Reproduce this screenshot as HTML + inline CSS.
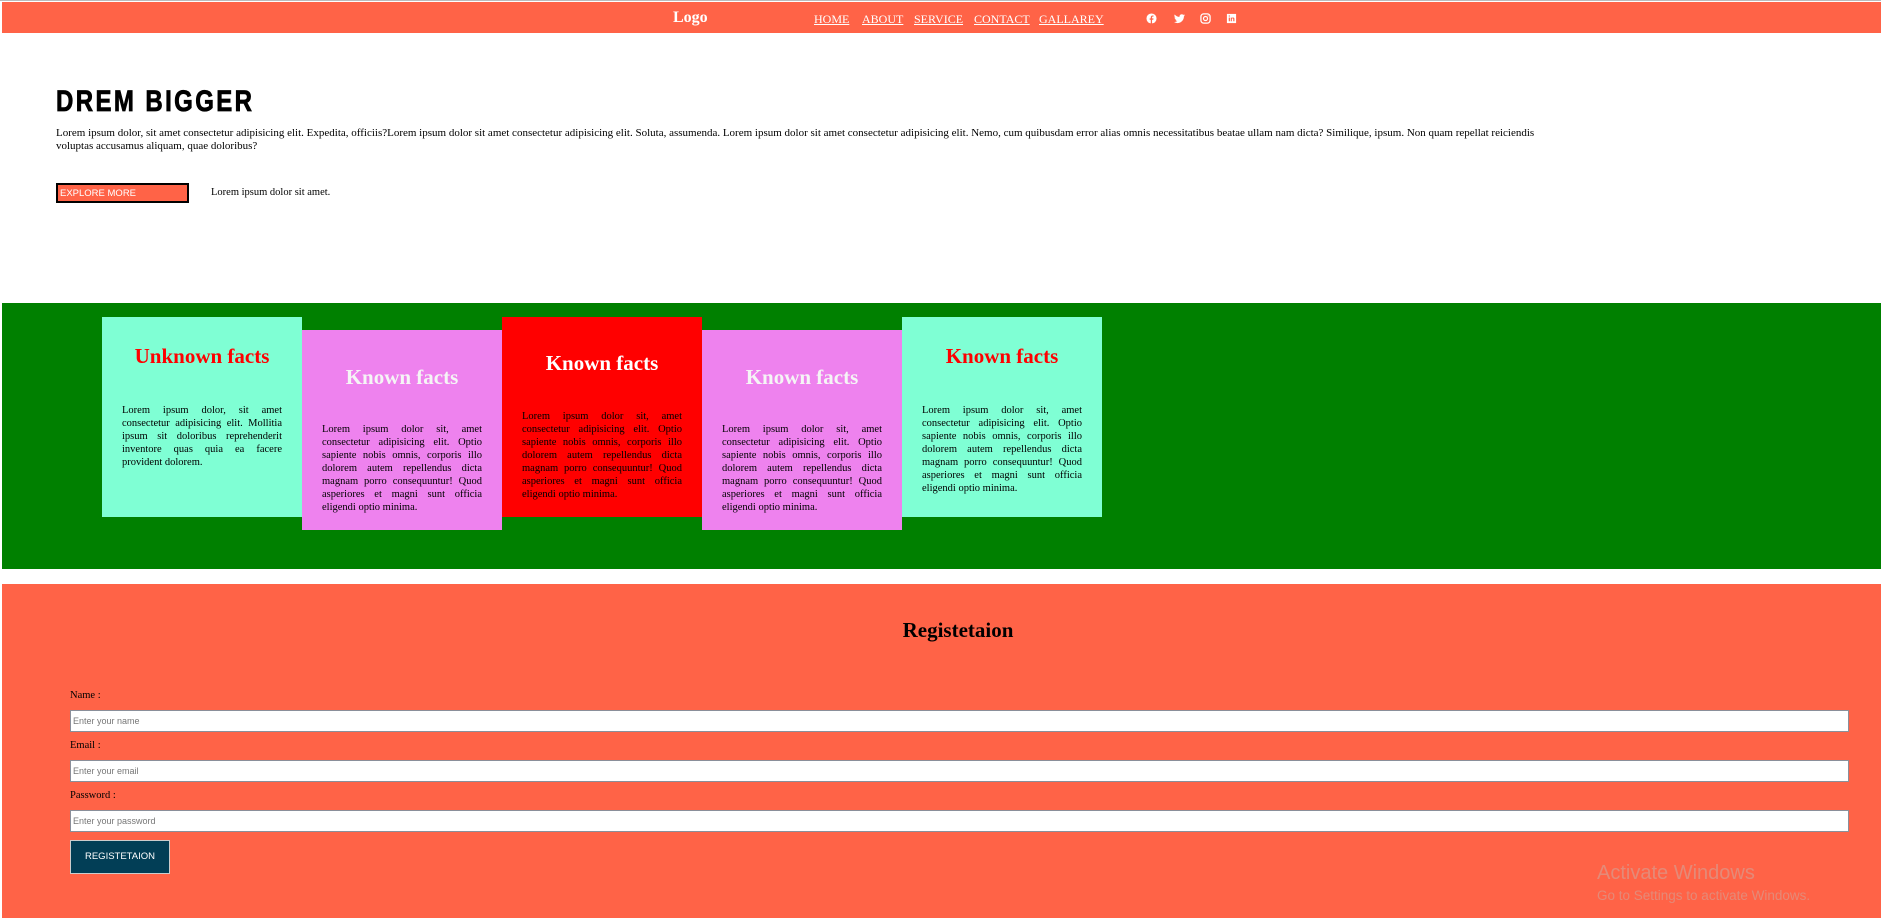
<!DOCTYPE html>
<html><head><meta charset="utf-8"><style>
*{box-sizing:border-box;margin:0;padding:0}
body{width:1881px;height:918px;overflow:hidden;background:#fff;font-family:"Liberation Serif",serif;position:relative;border-top:1px solid #bbb}
.nav{position:absolute;left:2px;top:1px;right:0;height:31px;background:#ff6347;color:#fff}
.logo{position:absolute;left:671px;top:7px;font-weight:bold;font-size:16px}
.links a{position:absolute;top:10px;color:#fff;font-size:12px;text-decoration:underline}
.ic{position:absolute;top:11px;width:11px;height:11px}
h1{position:absolute;left:56px;top:84px;font-family:"Liberation Sans",sans-serif;font-weight:900;font-size:30px;letter-spacing:3px;transform:scaleX(0.8);transform-origin:left;color:#000;-webkit-text-stroke:0.8px #000}
.intro{position:absolute;left:56px;top:126px;width:1545px;font-size:11px;line-height:13px}
.btn{position:absolute;left:56px;top:182px;width:133px;height:20px;background:#ff6347;border:2px solid #000;color:#fff;font-family:"Liberation Sans",sans-serif;font-size:9.5px;padding:3px 2px}
.side{position:absolute;left:211px;top:186px;font-size:10.5px}
.green{position:absolute;left:2px;top:302px;right:0;height:266px;background:#008000}
.card{position:absolute;width:200px;height:200px;padding:0 20px;text-align:center}
.card h2{font-size:21px;font-weight:bold;position:absolute;left:0;right:0}
.card p{position:absolute;left:20px;right:20px;text-align:justify;font-size:10.5px;line-height:13px}
.aq{background:#7fffd4;top:316px}.aq h2{color:red;top:27px}.aq p{top:87px}
.vi{background:#ee82ee;top:329px}.vi h2{color:#f5f5f5;top:35px}.vi p{top:93px}
.rd{background:red;top:316px}.rd h2{color:#fff;top:34px}.rd p{top:93px}
.reg{position:absolute;left:2px;top:583px;right:0;bottom:0;background:#ff6347}
.reg h3{position:absolute;left:0;width:1912px;text-align:center;top:34px;font-size:21px}
.lbl{position:absolute;left:68px;font-size:10.5px}
.inp{position:absolute;left:68px;width:1779px;height:22px;background:#fff;border:1px solid #8a8f9a;font-family:"Liberation Sans",sans-serif;font-size:9px;color:#777;padding:5px 2px}
.rb{position:absolute;left:68px;top:256px;width:100px;height:34px;background:#023e56;border:1px solid #ccc;color:#fff;font-family:"Liberation Sans",sans-serif;font-size:9.5px;text-align:center;line-height:32px}
.wm{position:absolute;color:#e48a78;font-family:"Liberation Sans",sans-serif}
</style></head><body>
<div class="nav">
<div class="logo">Logo</div>
<div class="links"><a style="left:812px">HOME</a><a style="left:860px">ABOUT</a><a style="left:912px">SERVICE</a><a style="left:972px">CONTACT</a><a style="left:1037px">GALLAREY</a></div>
<svg class="ic" style="left:1144px" viewBox="0 0 12 12"><circle cx="6" cy="6" r="5.5" fill="#fff"/><path d="M6.6 12V7.3h1.4l.2-1.5H6.6v-1c0-.5.2-.8.8-.8h.8V2.7H7.1c-1.2 0-1.9.7-1.9 1.9v1.2H4v1.5h1.2V12z" fill="#ff6347"/></svg>
<svg class="ic" style="left:1172px" viewBox="0 0 12 12"><path d="M12 2.3c-.4.2-.9.3-1.4.4.5-.3.9-.8 1.1-1.3-.5.3-1 .5-1.600.6A2.5 2.5 0 006 4.2 7 7 0 01.8 1.6a2.5 2.5 0 00.8 3.3c-.4 0-.8-.1-1.1-.3 0 1.2.9 2.2 2 2.4-.4.1-.8.1-1.1 0 .3 1 1.2 1.7 2.300 1.700A5 5 0 010 9.8 7 7 0 003.8 11c4.5 0 7-3.8 7-7v-.3c.5-.4.9-.8 1.2-1.4z" fill="#fff"/></svg>
<svg class="ic" style="left:1198px" viewBox="0 0 12 12"><rect x="1" y="1" width="10" height="10" rx="3" fill="none" stroke="#fff" stroke-width="1.4"/><circle cx="6" cy="6" r="2.2" fill="none" stroke="#fff" stroke-width="1.3"/><circle cx="8.8" cy="3.2" r=".6" fill="#fff"/></svg>
<svg class="ic" style="left:1224px" viewBox="0 0 12 12"><rect x="1" y="1" width="10" height="10" fill="#fff"/><path d="M3 5h1.3v4H3zM3.6 2.6a.7.7 0 110 1.4.7.7 0 010-1.4zM5.2 5h1.2v.6c.2-.4.7-.7 1.3-.7 1.3 0 1.5.8 1.5 1.9V9H7.9V7c0-.5 0-1.1-.7-1.1s-.8.5-.8 1.1v2H5.2z" fill="#ff6347"/></svg>
</div>
<h1>DREM BIGGER</h1>
<p class="intro">Lorem ipsum dolor, sit amet consectetur adipisicing elit. Expedita, officiis?Lorem ipsum dolor sit amet consectetur adipisicing elit. Soluta, assumenda. Lorem ipsum dolor sit amet consectetur adipisicing elit. Nemo, cum quibusdam error alias omnis necessitatibus beatae ullam nam dicta? Similique, ipsum. Non quam repellat reiciendis<br>voluptas accusamus aliquam, quae doloribus?</p>
<div class="btn">EXPLORE MORE</div>
<div class="side">Lorem ipsum dolor sit amet.</div>
<div class="green"></div>
<div class="card aq" style="left:102px"><h2>Unknown facts</h2><p>Lorem ipsum dolor, sit amet consectetur adipisicing elit. Mollitia ipsum sit doloribus reprehenderit inventore quas quia ea facere provident dolorem.</p></div>
<div class="card vi" style="left:302px"><h2>Known facts</h2><p>Lorem ipsum dolor sit, amet consectetur adipisicing elit. Optio sapiente nobis omnis, corporis illo dolorem autem repellendus dicta magnam porro consequuntur! Quod asperiores et magni sunt officia eligendi optio minima.</p></div>
<div class="card rd" style="left:502px"><h2>Known facts</h2><p>Lorem ipsum dolor sit, amet consectetur adipisicing elit. Optio sapiente nobis omnis, corporis illo dolorem autem repellendus dicta magnam porro consequuntur! Quod asperiores et magni sunt officia eligendi optio minima.</p></div>
<div class="card vi" style="left:702px"><h2>Known facts</h2><p>Lorem ipsum dolor sit, amet consectetur adipisicing elit. Optio sapiente nobis omnis, corporis illo dolorem autem repellendus dicta magnam porro consequuntur! Quod asperiores et magni sunt officia eligendi optio minima.</p></div>
<div class="card aq" style="left:902px"><h2>Known facts</h2><p>Lorem ipsum dolor sit, amet consectetur adipisicing elit. Optio sapiente nobis omnis, corporis illo dolorem autem repellendus dicta magnam porro consequuntur! Quod asperiores et magni sunt officia eligendi optio minima.</p></div>
<div class="reg">
<h3>Registetaion</h3>
<div class="lbl" style="top:106px">Name :</div>
<div class="inp" style="top:126px">Enter your name</div>
<div class="lbl" style="top:156px">Email :</div>
<div class="inp" style="top:176px">Enter your email</div>
<div class="lbl" style="top:206px">Password :</div>
<div class="inp" style="top:226px">Enter your password</div>
<div class="rb">REGISTETAION</div>
<div class="wm" style="left:1595px;top:278px;font-size:20px">Activate Windows</div>
<div class="wm" style="left:1595px;top:304px;font-size:13.5px">Go to Settings to activate Windows.</div>
</div>
</body></html>
